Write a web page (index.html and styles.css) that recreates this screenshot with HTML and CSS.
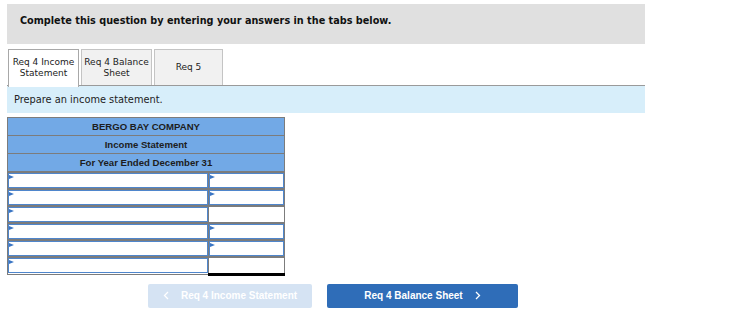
FILE: index.html
```html
<!DOCTYPE html>
<html>
<head>
<meta charset="utf-8">
<link rel="stylesheet" href="styles.css">
</head>
<body>
<div class="page">
  <div class="instructions">Complete this question by entering your answers in the tabs below.</div>
  <div class="tabs">
    <div class="tab active">Req 4 Income<br>Statement</div>
    <div class="tab">Req 4 Balance<br>Sheet</div>
    <div class="tab wide">Req 5</div>
  </div>
  <div class="prompt">Prepare an income statement.</div>
  <table class="stmt">
    <tr><th colspan="2">BERGO BAY COMPANY</th></tr>
    <tr><th colspan="2">Income Statement</th></tr>
    <tr><th colspan="2">For Year Ended December 31</th></tr>
    <tr><td class="lbl"><div class="inp"></div></td><td class="amt"><div class="inp"></div></td></tr>
    <tr><td class="lbl"><div class="inp"></div></td><td class="amt"><div class="inp"></div></td></tr>
    <tr><td class="lbl"><div class="inp"></div></td><td class="amt total"><div class="blank"></div></td></tr>
    <tr><td class="lbl"><div class="inp"></div></td><td class="amt"><div class="inp"></div></td></tr>
    <tr><td class="lbl"><div class="inp"></div></td><td class="amt"><div class="inp"></div></td></tr>
    <tr><td class="lbl"><div class="inp"></div></td><td class="amt grand"><div class="blank"></div></td></tr>
  </table>
  <div class="nav">
    <div class="btn prev">
      <svg width="6" height="9" viewBox="0 0 6 9"><polyline points="5,1 1.5,4.5 5,8" fill="none" stroke="#ffffff" stroke-width="1.3"/></svg>
      <span>Req 4 Income Statement</span>
    </div>
    <div class="btn next">
      <span>Req 4 Balance Sheet</span>
      <svg width="6" height="9" viewBox="0 0 6 9"><polyline points="1,1 4.5,4.5 1,8" fill="none" stroke="#ffffff" stroke-width="1.3"/></svg>
    </div>
  </div>
</div>
</body>
</html>
```

FILE: styles.css
```css
* { box-sizing: border-box; }
body {
  margin: 0;
  background: #ffffff;
  font-family: "DejaVu Sans", Verdana, sans-serif;
  color: #222222;
}
.page {
  padding: 4px 0 0 7px;
  width: 645px;
}
.instructions {
  background: #e0e0e0;
  height: 40px;
  padding: 11px 0 0 13px;
  font-size: 9.7px;
  font-weight: bold;
  color: #111111;
}
.tabs {
  display: flex;
  gap: 2px;
  margin-top: 5px;
  padding-left: 1px;
  height: 36px;
  position: relative;
  z-index: 1;
}
.tab {
  width: 71px;
  height: 36px;
  border: 1px solid #c4c4c4;
  border-bottom: none;
  background: #f1f1f1;
  font-size: 9px;
  line-height: 11px;
  text-align: center;
  padding-top: 7px;
  color: #222222;
}
.tab.active {
  background: #ffffff;
  width: 71px;
  height: 38px;
  border-color: #a8a8a8;
}
.tab.wide {
  width: 69px;
  padding-top: 12px;
}
.prompt {
  background: #d7eefa;
  border-top: 1px solid #9a9a9a;
  height: 28px;
  font-size: 9.8px;
  padding: 8px 0 0 7px;
  color: #222222;
}
.stmt {
  margin-top: 4px;
  border-collapse: collapse;
  width: 278px;
  font-family: "Liberation Sans", Arial, sans-serif;
}
.stmt th {
  background: #72a9e6;
  border: 1px solid #7c7c7c;
  height: 18px;
  padding: 0;
  font-size: 9.6px;
  font-weight: bold;
  color: #1d1d1d;
  text-align: center;
}
.stmt td {
  border: 1px solid #7c7c7c;
  border-top-width: 2px;
  padding: 0;
  height: 17px;
  background: #ffffff;
}
.stmt td.lbl { width: 202px; }
.stmt td.amt { width: 76px; }
.inp {
  position: relative;
  height: 15px;
  border: 1px solid #4f86cc;
  background: #ffffff;
}
.inp::before {
  content: "";
  position: absolute;
  left: 0;
  top: 1px;
  border-left: 5px solid #3a75c4;
  border-top: 2.5px solid transparent;
  border-bottom: 2.5px solid transparent;
}
.blank { height: 15px; }
.stmt td.total { border-bottom: 1px solid #000000; }
.stmt td.grand { border-bottom: 3px solid #000000; }
.nav {
  display: flex;
  gap: 15px;
  margin-top: 8px;
  padding-left: 141px;
}
.btn {
  height: 24px;
  border-radius: 2px;
  display: flex;
  align-items: center;
  justify-content: center;
  gap: 12px;
  font-family: "Liberation Sans", Arial, sans-serif;
  font-size: 10px;
  font-weight: bold;
  color: #ffffff;
}
.btn.prev {
  width: 164px;
  background: #d5e3f3;
}
.btn.next {
  width: 191px;
  background: #2f6db8;
}
```
